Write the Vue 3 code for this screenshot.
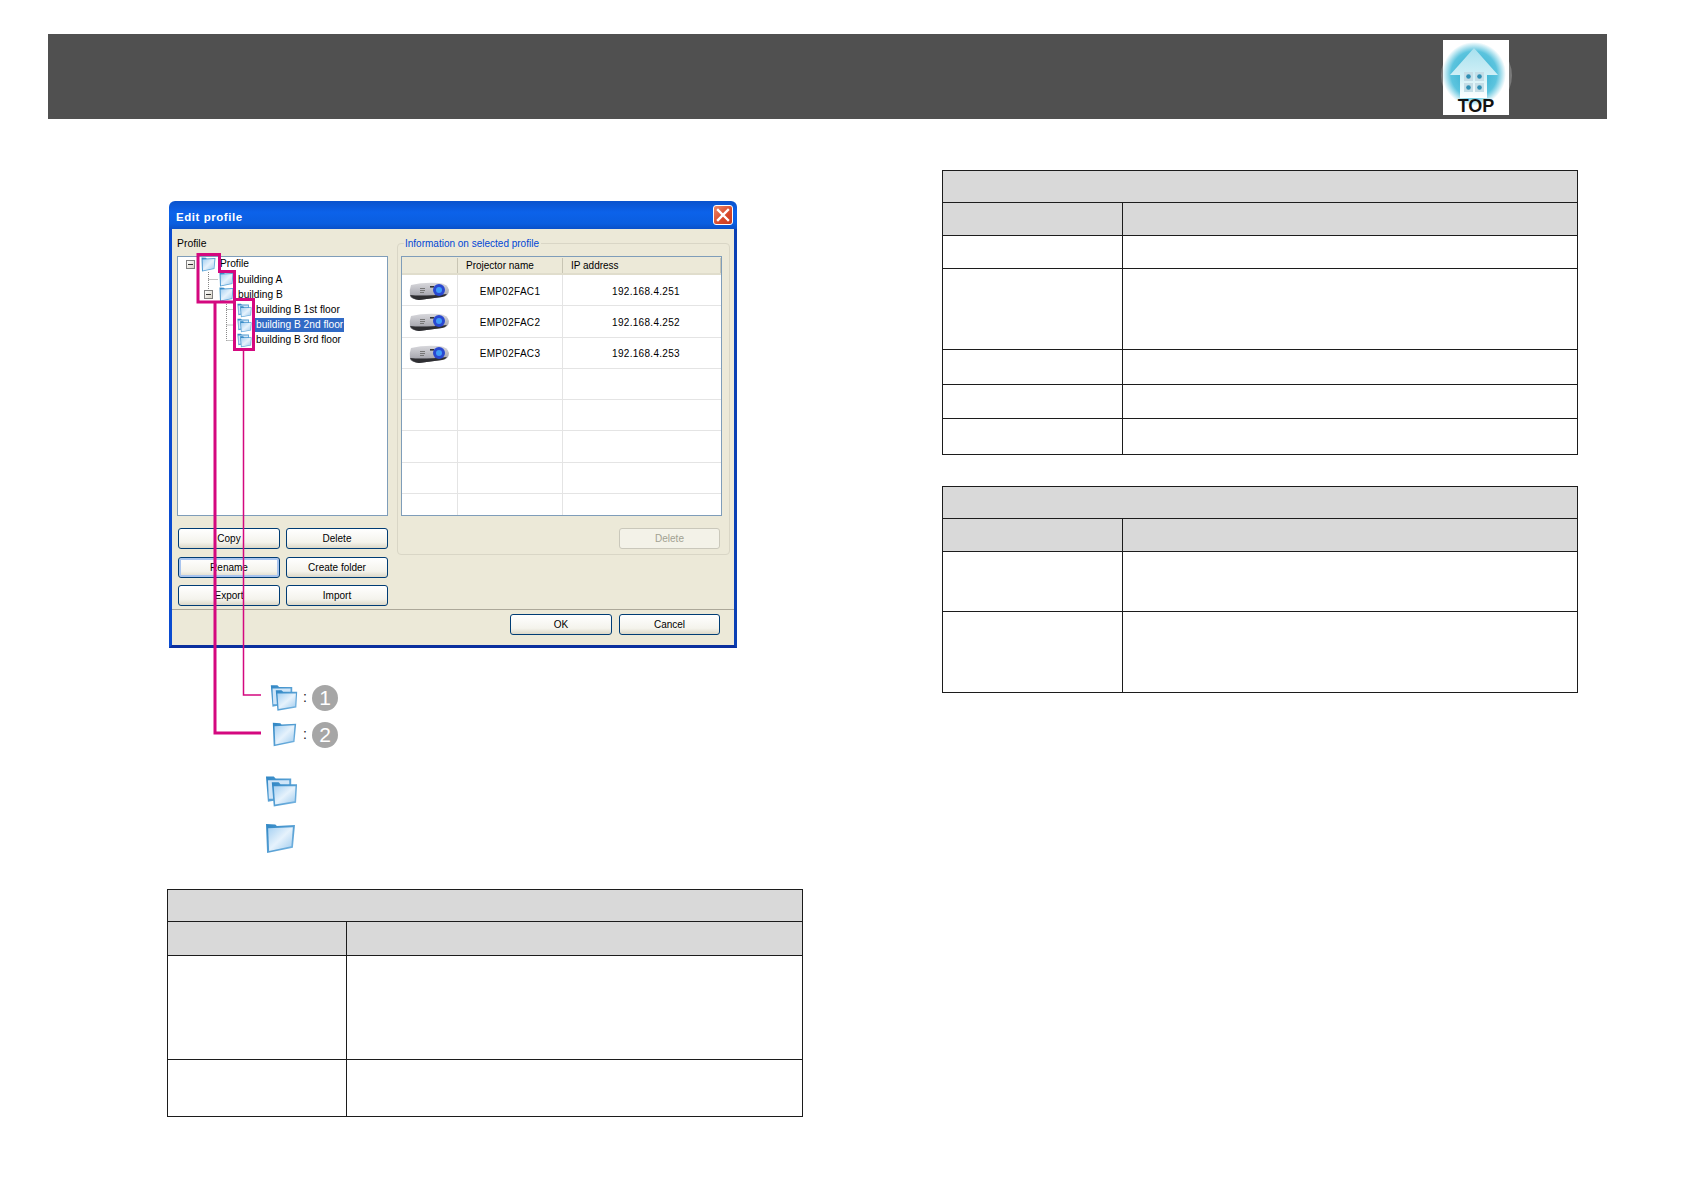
<script setup>
const treeRows = [
  { label: 'Profile', depth: 0, icon: 'folder-one', expander: true },
  { label: 'building A', depth: 1, icon: 'folder-one' },
  { label: 'building B', depth: 1, icon: 'folder-one', expander: true },
  { label: 'building B 1st floor', depth: 2, icon: 'folder-two' },
  { label: 'building B 2nd floor', depth: 2, icon: 'folder-two', selected: true },
  { label: 'building B 3rd floor', depth: 2, icon: 'folder-two' }
]
const projectors = [
  { name: 'EMP02FAC1', ip: '192.168.4.251' },
  { name: 'EMP02FAC2', ip: '192.168.4.252' },
  { name: 'EMP02FAC3', ip: '192.168.4.253' },
  {}, {}, {}, {}, {}
]
const leftButtons = [
  { label: 'Copy' }, { label: 'Delete' },
  { label: 'Rename', focus: true }, { label: 'Create folder' },
  { label: 'Export' }, { label: 'Import' }
]
const legend = [
  { icon: 'folder-two', num: '1', w: 28, h: 28 },
  { icon: 'folder-one', num: '2', w: 25, h: 25 }
]
const leftTable = { title: 32, head: 34, rows: [104, 57] }
const rightTables = [
  { title: 32, head: 33, rows: [33, 81, 35, 34, 36] },
  { title: 32, head: 33, rows: [60, 81] }
]
</script>

<template>
  <div class="page">
    <svg class="defs" width="0" height="0" aria-hidden="true">
      <defs>
        <linearGradient id="fld" x1="0" y1="0" x2="1" y2="1">
          <stop offset="0" stop-color="#a5d0f2" />
          <stop offset="0.5" stop-color="#e6f2fc" />
          <stop offset="1" stop-color="#9fcbee" />
        </linearGradient>
        <linearGradient id="fldedge" x1="0" y1="0" x2="1" y2="1">
          <stop offset="0" stop-color="#2f86c4" />
          <stop offset="1" stop-color="#79b6e2" />
        </linearGradient>
        <linearGradient id="prj" x1="0" y1="0" x2="0" y2="1">
          <stop offset="0" stop-color="#d8d8dc" />
          <stop offset="0.7" stop-color="#aaaab2" />
          <stop offset="1" stop-color="#55555a" />
        </linearGradient>
        <linearGradient id="house" x1="0" y1="0" x2="0" y2="1">
          <stop offset="0" stop-color="#a8e0ee" />
          <stop offset="0.6" stop-color="#d4f1f7" />
          <stop offset="1" stop-color="#ffffff" />
        </linearGradient>
        <radialGradient id="sky" cx="0.5" cy="0.5" r="0.5">
          <stop offset="0" stop-color="#2aa9cc" />
          <stop offset="0.72" stop-color="#5cc4de" />
          <stop offset="1" stop-color="#ffffff" />
        </radialGradient>
        <symbol id="folder-one" viewBox="0 0 30 30">
          <path d="M1 1 L10 1.500 L11.500 3 L29 2 L27 24 L2 29 Z" fill="url(#fldedge)" />
          <path d="M3 5 L27 4 L25.500 22.500 L4 27 Z" fill="url(#fld)" />
        </symbol>
        <symbol id="folder-two" viewBox="0 0 34 33">
          <path d="M1 1 L9 1 L11 3 L27 3 L27 10 L9 26 L3 27 Z" fill="url(#fldedge)" />
          <path d="M3 5 L25 5 L25 9 L8 24 L4 24 Z" fill="#cfe5f8" />
          <path d="M7 7 L14 7 L16 9 L33 9 L32 28 L9 32 Z" fill="url(#fldedge)" />
          <path d="M9 11 L31.500 11 L30.500 26.500 L10.500 30 Z" fill="url(#fld)" />
        </symbol>
        <symbol id="projector" viewBox="0 0 40 18">
          <path d="M2 3 Q14 0 30 1 Q39 2 40 8 Q40 14 33 15 L10 18 Q2 17 1 14 Q0 8 2 3 Z" fill="url(#prj)" />
          <path d="M1 13 Q14 14.500 38 12 Q36 15 33 15 L10 18 Q3 17 1 13 Z" fill="#2e2e32" />
          <rect x="11" y="6" width="5" height="1" fill="#777" />
          <rect x="11" y="8" width="5" height="1" fill="#777" />
          <rect x="11" y="10" width="4" height="1" fill="#777" />
          <rect x="21" y="4" width="4" height="1.600" fill="#333" />
          <circle cx="30" cy="8" r="6" fill="#2a48d0" />
          <circle cx="30" cy="8" r="3" fill="#3f9cf8" />
        </symbol>
      </defs>
    </svg>

    <header class="topbar">
      <div class="logo">
        <svg class="logo-art" viewBox="0 0 66 75">
          <rect width="66" height="75" fill="#fff" />
          <circle cx="31" cy="34" r="32" fill="url(#sky)" />
          <path d="M31 8 L55 35 L44 35 L44 58 L17 58 L17 35 L7 35 Z" fill="url(#house)" />
          <g fill="#c4dde6">
            <rect x="21" y="32" width="9" height="9" />
            <rect x="32" y="32" width="9" height="9" />
            <rect x="21" y="43" width="9" height="9" />
            <rect x="32" y="43" width="9" height="9" />
          </g>
          <g fill="#2f8fb4">
            <circle cx="25.500" cy="36.500" r="2.300" />
            <circle cx="36.500" cy="36.500" r="2.300" />
            <circle cx="25.500" cy="47.500" r="2.300" />
            <circle cx="36.500" cy="47.500" r="2.300" />
          </g>
        </svg>
        <span class="logo-text">TOP</span>
      </div>
    </header>

    <main class="columns">
      <section class="left">
        <div class="figure">
          <div class="dialog">
            <div class="titlebar">
              <span class="title">Edit profile</span>
              <span class="close">
                <svg viewBox="0 0 20 20" width="20" height="20">
                  <path d="M5 5 L15 15 M15 5 L5 15" stroke="#fff" stroke-width="2.400" stroke-linecap="square" />
                </svg>
              </span>
            </div>
            <div class="dialog-body">
              <div class="panes">
                <div class="pane-left">
                  <div class="label">Profile</div>
                  <div class="tree">
                    <svg class="tree-lines" width="209" height="100" viewBox="178 257 209 100">
                      <path d="M208.500 270V295M208.500 279.500H218M226.500 302V340.500M226.500 309.500H236M226.500 325H236M226.500 340.500H236" stroke="#888" stroke-dasharray="1 1" fill="none" />
                    </svg>
                    <div
                      v-for="row in treeRows"
                      :key="row.label"
                      class="tree-row"
                      :style="{ paddingLeft: 8 + row.depth * 18 + 'px' }"
                    >
                      <span class="expander" :class="{ hidden: !row.expander }"></span>
                      <svg class="tree-icon" width="15" height="15"><use :href="'#' + row.icon" /></svg>
                      <span class="tree-text" :class="{ selected: row.selected }">{{ row.label }}</span>
                    </div>
                  </div>
                  <div class="button-grid">
                    <button
                      v-for="b in leftButtons"
                      :key="b.label"
                      class="xp-btn"
                      :class="{ focus: b.focus }"
                    >{{ b.label }}</button>
                  </div>
                </div>
                <div class="pane-right">
                  <span class="legend-title">Information on selected profile</span>
                  <div class="list">
                    <div class="list-head">
                      <span class="head-cell head-icon"></span>
                      <span class="head-cell">Projector name</span>
                      <span class="head-cell">IP address</span>
                    </div>
                    <div v-for="(p, i) in projectors" :key="i" class="list-row">
                      <span class="cell">
                        <svg v-if="p.name" width="40" height="18"><use href="#projector" /></svg>
                      </span>
                      <span class="cell">{{ p.name }}</span>
                      <span class="cell">{{ p.ip }}</span>
                    </div>
                  </div>
                  <button class="xp-btn disabled">Delete</button>
                </div>
              </div>
              <div class="footer">
                <button class="xp-btn wide">OK</button>
                <button class="xp-btn">Cancel</button>
              </div>
            </div>
          </div>

          <div class="legend">
            <div v-for="item in legend" :key="item.num" class="legend-row">
              <span class="legend-icon">
                <svg :width="item.w" :height="item.h"><use :href="'#' + item.icon" /></svg>
              </span>
              <span class="colon">:</span>
              <span class="circle">{{ item.num }}</span>
            </div>
          </div>

          <div class="big-icons">
            <svg width="33" height="33"><use href="#folder-two" /></svg>
            <svg width="31" height="31"><use href="#folder-one" /></svg>
          </div>

          <svg class="callouts" width="300" height="560" viewBox="167 201 300 560">
            <g fill="none" stroke="#d4087f">
              <path stroke-width="3" d="M198 254.500H219.500V271.500H234.500V302H198Z" />
              <path stroke-width="3" d="M234.500 299.500H253.500V349.500H234.500Z" />
              <path stroke-width="3" d="M215 302V733H261" />
              <path stroke-width="1.500" d="M243.500 350V695H261" />
            </g>
          </svg>
        </div>

        <table class="spec spec-left">
          <colgroup><col class="c1" /><col /></colgroup>
          <tbody>
            <tr class="shade" :style="{ height: leftTable.title + 'px' }"><td colspan="2"></td></tr>
            <tr class="shade" :style="{ height: leftTable.head + 'px' }"><td></td><td></td></tr>
            <tr v-for="(h, i) in leftTable.rows" :key="i" :style="{ height: h + 'px' }"><td></td><td></td></tr>
          </tbody>
        </table>
      </section>

      <section class="right">
        <table v-for="(t, n) in rightTables" :key="n" class="spec spec-right">
          <colgroup><col class="c1" /><col /></colgroup>
          <tbody>
            <tr class="shade" :style="{ height: t.title + 'px' }"><td colspan="2"></td></tr>
            <tr class="shade" :style="{ height: t.head + 'px' }"><td></td><td></td></tr>
            <tr v-for="(h, i) in t.rows" :key="i" :style="{ height: h + 'px' }"><td></td><td></td></tr>
          </tbody>
        </table>
      </section>
    </main>
  </div>
</template>

<style scoped>
.page {
  width: 1684px;
  height: 1190px;
  background: #fff;
  padding-top: 34px;
  box-sizing: border-box;
  font-family: "Liberation Sans", Arial, sans-serif;
  overflow: hidden;
}
.defs { position: absolute; }
.topbar {
  margin-left: 48px;
  width: 1559px;
  height: 85px;
  background: #505050;
  display: flex;
  justify-content: flex-end;
  align-items: flex-start;
  padding: 6px 98px 0 0;
  box-sizing: border-box;
}
.logo {
  position: relative;
  width: 66px;
  height: 75px;
}
.logo::before {
  content: "";
  position: absolute;
  left: -2.5px;
  top: 0;
  width: 71px;
  height: 71px;
  border-radius: 50%;
  background: #7a7a7a;
}
.logo-art { position: relative; display: block; width: 66px; height: 75px; }
.logo-text {
  position: absolute;
  left: 0;
  right: 0;
  bottom: 0;
  line-height: 18px;
  text-align: center;
  font-size: 18px;
  font-weight: 700;
  color: #111;
}
.columns {
  display: flex;
  padding-left: 167px;
}
.left { width: 636px; padding-top: 82px; }
.right {
  width: 636px;
  margin-left: 139px;
  padding-top: 51px;
  display: flex;
  flex-direction: column;
  gap: 31px;
}
.figure { position: relative; height: 688px; }
.callouts { position: absolute; left: 0; top: 0; pointer-events: none; }
.dialog {
  margin-left: 2px;
  width: 568px;
  height: 447px;
  font-size: 10px;
  color: #000;
  display: flex;
  flex-direction: column;
}
.titlebar {
  height: 28px;
  flex: none;
  background: linear-gradient(#0a52cc, #0c62ea 40%, #0a5ee0 80%, #0a50c8);
  border-radius: 6px 6px 0 0;
  display: flex;
  align-items: center;
  justify-content: space-between;
  padding: 0 4px 0 7px;
}
.title {
  color: #fff;
  font-weight: 700;
  font-size: 11.5px;
  letter-spacing: 0.55px;
  padding-top: 3px;
}
.close {
  width: 20px;
  height: 20px;
  border: 1px solid #fff;
  border-radius: 3px;
  background: linear-gradient(135deg, #ec8a6a, #d8482a 60%, #c83a20);
  box-sizing: border-box;
  display: flex;
  align-items: center;
  justify-content: center;
  overflow: hidden;
  flex: none;
}
.close svg { flex: none; }
.dialog-body {
  flex: 1;
  background: #ece9d8;
  border-left: 3px solid #0a4bd0;
  border-right: 3px solid #0a3fb4;
  border-bottom: 3px solid #0a2f9e;
  display: flex;
  flex-direction: column;
}
.panes {
  height: 381px;
  flex: none;
  display: flex;
  padding-left: 5px;
  gap: 9px;
  border-bottom: 1px solid #aca899;
  box-sizing: border-box;
}
.pane-left { width: 211px; flex: none; padding-top: 8px; }
.label { line-height: 13px; height: 13px; margin-bottom: 6px; font-size: 10.4px; }
.tree {
  position: relative;
  height: 260px;
  box-sizing: border-box;
  background: #fff;
  border: 1px solid #7f9db9;
  font-size: 10.2px;
}
.tree-lines { position: absolute; left: 0; top: 0; }
.tree-row {
  position: relative;
  height: 15.2px;
  display: flex;
  align-items: center;
  white-space: nowrap;
}
.expander {
  position: relative;
  width: 9px;
  height: 9px;
  box-sizing: border-box;
  border: 1px solid #808080;
  background: linear-gradient(135deg, #fff, #d8d4c8);
  margin-right: 6px;
  flex: none;
}
.expander::after {
  content: "";
  position: absolute;
  left: 1px;
  right: 1px;
  top: 3px;
  height: 1px;
  background: #333;
}
.expander.hidden { visibility: hidden; }
.tree-icon { flex: none; margin-right: 3px; background: #fff; }
.tree-text { padding: 0 1px; line-height: 14px; margin-top: -0.5px; }
.tree-text.selected { background: #316ac5; color: #fff; }
.button-grid {
  margin-top: 12px;
  padding-left: 1px;
  display: grid;
  grid-template-columns: 102px 102px;
  grid-auto-rows: 21px;
  column-gap: 6px;
  row-gap: 7.5px;
}
.xp-btn {
  box-sizing: border-box;
  width: 102px;
  height: 21px;
  padding: 0;
  border: 1px solid #003c74;
  border-radius: 3px;
  background: linear-gradient(#fff, #f4f3ec 70%, #dcd8c8);
  font: 10px "Liberation Sans", Arial, sans-serif;
  color: #000;
}
.xp-btn.focus { box-shadow: inset 0 0 0 2px #a8c4ee; }
.xp-btn.disabled {
  align-self: flex-end;
  margin: 12px 2px 0 0;
  width: 101px;
  border-color: #cac8bb;
  background: #f3f2e8;
  color: #a1a192;
}
.pane-right {
  position: relative;
  width: 333px;
  height: 312px;
  margin-top: 14px;
  flex: none;
  box-sizing: border-box;
  border: 1px solid #d9d6c6;
  border-radius: 4px;
  padding: 12px 7px 0 3px;
  display: flex;
  flex-direction: column;
}
.legend-title {
  position: absolute;
  left: 6px;
  top: -7px;
  padding: 0 2px 0 1px;
  background: #ece9d8;
  line-height: 13px;
  color: #0046d5;
}
.list {
  height: 260px;
  flex: none;
  box-sizing: border-box;
  background: #fff;
  border: 1px solid #7f9db9;
  overflow: hidden;
}
.list-head {
  display: grid;
  grid-template-columns: 56px 105px 1fr;
  height: 18px;
  box-sizing: border-box;
  background: #ece9d8;
  border-bottom: 2px solid #e0ddcc;
}
.head-cell {
  padding: 1px 0 0 8px;
  border-right: 1px solid #c8c5b4;
  margin: 1px 0;
  line-height: 14px;
}
.list-row {
  display: grid;
  grid-template-columns: 56px 105px 1fr;
  height: 31.3px;
  box-sizing: border-box;
  border-bottom: 1px solid #e4e4e4;
}
.cell {
  display: flex;
  align-items: center;
  justify-content: center;
  border-right: 1px solid #e4e4e4;
  letter-spacing: 0.3px;
  padding-top: 2px;
}
.cell:first-child { padding-right: 1px; }
.cell:last-child { border-right: none; padding-left: 8px; }
.footer {
  flex: 1;
  display: flex;
  justify-content: flex-end;
  gap: 7px;
  padding: 4px 14px 0 0;
}
.xp-btn.wide { width: 102px; }
.footer .xp-btn:last-child { width: 101px; }
.legend {
  margin-top: 36px;
  padding-left: 100px;
  display: flex;
  flex-direction: column;
  gap: 10px;
}
.legend-row {
  display: flex;
  align-items: center;
  height: 27px;
}
.legend-icon {
  width: 34px;
  display: flex;
  justify-content: center;
}
.colon { width: 9px; font-size: 14px; line-height: 27px; color: #222; margin-left: 2px; }
.circle {
  width: 26px;
  height: 26px;
  border-radius: 50%;
  background: #a6a6a6;
  color: #fff;
  font-size: 21px;
  line-height: 26px;
  text-align: center;
}
.big-icons {
  margin-top: 27px;
  padding-left: 98px;
  display: flex;
  flex-direction: column;
  align-items: flex-start;
  gap: 15px;
}
.spec {
  border-collapse: collapse;
  table-layout: fixed;
}
.spec td { border: 1px solid #1c1c1c; padding: 0; }
.spec .shade td { background: #d9d9d9; }
.spec-left { width: 636px; }
.spec-left .c1 { width: 179px; }
.spec-right { width: 636px; }
.spec-right .c1 { width: 180px; }
</style>
